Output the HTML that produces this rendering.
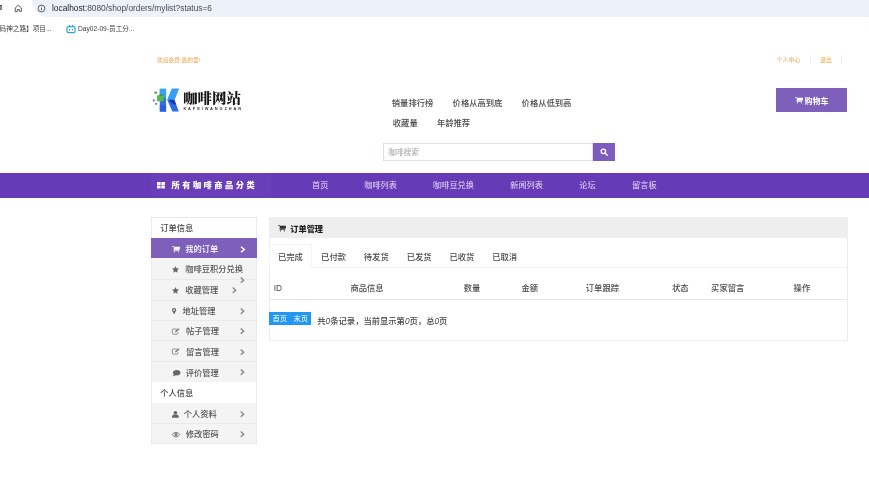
<!DOCTYPE html>
<html lang="zh-CN">
<head>
<meta charset="utf-8">
<title>咖啡网站 - 订单管理</title>
<style>
*{margin:0;padding:0;box-sizing:border-box}
html,body{width:869px;height:500px;overflow:hidden;background:#fff}
body{position:relative;font-family:"Liberation Sans","Noto Sans CJK SC",sans-serif;color:#444;-webkit-font-smoothing:antialiased}
.t{position:absolute;white-space:nowrap;line-height:1;font-size:8.2px}
.b{position:absolute}
svg{position:absolute;overflow:visible}
/* browser chrome */
#pill{left:32px;top:-16px;width:900px;height:33px;border-radius:16.5px;background:#edf1fa}
#url{left:52px;top:4.4px;font-size:8.34px;color:#4a4a4a}
#url b{font-weight:400;color:#1f1f1f}
.bm{top:25.8px;font-size:6.65px;color:#3c3c3c}
/* top bar */
.top{font-size:5.75px;color:#f0a24a;top:57.8px}
.sep{top:55px;width:1px;height:8px;background:#ececec}
/* logo */
#logoT{left:183.2px;top:90.8px;font-size:14.5px;transform:scaleY(.94);transform-origin:0 100%;font-weight:900;font-family:"Liberation Serif","Noto Serif CJK SC",serif;color:#161616;letter-spacing:-.1px}
#logoS{left:183.4px;top:107.2px;font-size:3.9px;letter-spacing:1.92px;color:#333;font-weight:700}
/* header links */
.hl{font-size:8.3px;color:#4a4a4a}
#sin{left:383px;top:142.6px;width:210px;height:18px;border:1px solid #e0dff1;background:#fff}
#sbt{left:592.6px;top:142.6px;width:22.7px;height:18px;background:#7e5bbe}
#sph{left:388.2px;top:148.5px;font-size:7.7px;color:#a3a3a3}
#cart{left:776px;top:88.4px;width:70.8px;height:23.8px;background:#7e5fba}
#cartT{left:804.5px;top:97.7px;font-size:8px;color:#fff;font-weight:700}
/* nav */
#nav{left:0;top:173px;width:869px;height:24.8px;background:#673ab7}
#navc{left:151px;top:173px;width:120px;height:24.8px;background:#6a3eb9}
#navcT{left:171.5px;top:182.1px;font-size:8.2px;font-weight:900;color:#fff;letter-spacing:2.52px}
.nv{top:182.4px;font-size:8.2px;color:#e4daf4}
/* sidebar */
#side{left:151px;top:217.2px;width:105.8px;height:227.2px;background:#f4f4f4;border:1px solid #eaeaea}
.sh{left:151.5px;width:104.8px;height:20.6px;background:#fff}
.sl{left:152px;width:104px;height:1px;background:#e9e9e9}
.sl2{left:152px;width:104px;height:1px;background:#fbfbfb}
.st{font-size:8.25px;color:#555}
.shT{font-size:8.25px;color:#444;left:160.3px}
#act{left:151px;top:238.3px;width:105.8px;height:20.1px;background:#7e5fba}
/* main */
#pan{left:268.5px;top:217.1px;width:579.2px;height:124.3px;border:1px solid #ebebeb;background:#fff}
#panH{left:268.5px;top:217.1px;width:579.2px;height:21.4px;background:#eeeeee}
#panT{left:290.3px;top:225.6px;font-size:8.2px;font-weight:900;color:#1e1e1e}
.tab{top:252.8px;font-size:8.3px;color:#4a4a4a}
#tabA{left:269.3px;top:244px;width:43px;height:24.3px;border:1px solid #f5f5f5;border-bottom:none;background:#fff}
#tabL{left:269.3px;top:267.4px;width:578px;height:1px;background:#f3f3f3}
.th{top:284.1px;font-size:8.3px;color:#4a4a4a}
#thL{left:269.3px;top:299.3px;width:578px;height:1px;background:#e6e6e6}
#pg{left:268.8px;top:311.5px;width:42.6px;height:13.4px;background:#2196f3}
.pgT{top:314.9px;font-size:7.35px;color:#fff}
#pgi{left:317.3px;top:316.7px;font-size:8.3px;color:#444}
#pgi i{font-style:italic}
.t,svg{filter:blur(.3px)}
.st,.shT,.tab,.th,.hl,#pgi{font-weight:500}
</style>
</head>
<body>
<!-- browser chrome -->
<div class="b" id="pill"></div>
<svg style="left:0;top:5.400px" width="2" height="5" viewBox="0 0 2 5"><path d="M0 .6h1.100v3.600H0" fill="none" stroke="#3a3a3a" stroke-width="1.100"/></svg>
<svg style="left:13.600px;top:3.700px" width="8.600" height="8.600" viewBox="0 0 10 10"><path d="M1.4 4.6 5 1.3l3.6 3.3v4H6.2V6.4H3.8v2.5H1.4z" fill="none" stroke="#4a4a4a" stroke-width="1.05" stroke-linejoin="round"/></svg>
<svg style="left:36.700px;top:3.700px" width="9" height="9" viewBox="0 0 10 10"><circle cx="5" cy="5" r="3.8" fill="none" stroke="#444" stroke-width="0.95"/><path d="M5 4.4v2.6M5 2.9v.9" stroke="#444" stroke-width="0.95"/></svg>
<div class="t" id="url"><b>localhost</b>:8080/shop/orders/mylist?status=6</div>
<div class="t bm" style="left:-.5px">码神之路】项目...</div>
<svg style="left:65.5px;top:23.5px" width="10" height="10" viewBox="0 0 10 10"><rect x="1" y="2.6" width="8" height="6" rx="1.4" fill="none" stroke="#29a8d8" stroke-width="1.2"/><path d="M3 .8l1.2 1.6M7 .8 5.8 2.4" stroke="#29a8d8" stroke-width="1"/><path d="M3.5 5v1.4M6.5 5v1.4" stroke="#29a8d8" stroke-width="1"/></svg>
<div class="t bm" style="left:78px">Day02-09-员工分...</div>

<!-- top bar -->
<div class="t top" style="left:157px">欢迎会员:鑫的里!</div>
<div class="t top" style="left:776.8px;font-size:5.9px">个人中心</div>
<div class="b sep" style="left:809.5px"></div>
<div class="t top" style="left:820px;font-size:5.9px;color:#f2a93b">退出</div>
<div class="b sep" style="left:841px"></div>

<!-- logo -->
<svg style="left:151px;top:87px" width="30" height="27" viewBox="0 0 30 27">
  <path d="M8.800 1.800h6.300v22.800H8.800z" fill="#2d72e4"/>
  <path d="M8.800 1.800h6.300v9H8.800z" fill="#3aa2f2"/>
  <path d="M8.800 18h6.300v6.600H8.800z" fill="#2c5fe0"/>
  <rect x="3.400" y="4.500" width="2.700" height="2.300" fill="#5cb04a"/>
  <rect x="1.900" y="12.500" width="1.700" height="1.800" fill="#2f5f9e"/>
  <rect x="4.200" y="16" width="1.900" height="1.700" fill="#3b86dd"/>
  <rect x="6.100" y="8.300" width="6.500" height="6" fill="#55b944"/>
  <rect x="8.400" y="7.300" width="3.400" height="1.600" fill="#3a9440"/>
  <path d="M20.900 1.800h6.900L23.400 13.100l4.400 11.500h-6.400L16.300 13.100z" fill="#2a6ce8"/>
  <path d="M20.900 1.800h6.900L23.400 13.100H16.300z" fill="#369ff5"/>
  <path d="M18.400 12.400l5 .5 1.900 5.200-5.400-2.400z" fill="#1a38a8"/>
</svg>
<div class="t" id="logoT">咖啡网站</div>
<div class="t" id="logoS">KAFEIWANGZHAN</div>

<!-- header links -->
<div class="t hl" style="left:391.8px;top:99.1px">销量排行榜</div>
<div class="t hl" style="left:452.6px;top:99.1px">价格从高到底</div>
<div class="t hl" style="left:521.6px;top:99.1px">价格从低到高</div>
<div class="t hl" style="left:392.8px;top:119.1px">收藏量</div>
<div class="t hl" style="left:436.9px;top:119.1px">年龄推荐</div>
<div class="b" id="sin"></div>
<div class="t" id="sph">咖啡搜索</div>
<div class="b" id="sbt"></div>
<svg style="left:599.600px;top:147.700px" width="8.400" height="8.400" viewBox="0 0 10 10"><circle cx="4" cy="4" r="2.7" fill="none" stroke="#fff" stroke-width="1.5"/><path d="M6 6l2.6 2.6" stroke="#fff" stroke-width="1.7" stroke-linecap="round"/></svg>
<div class="b" id="cart"></div>
<svg style="left:795px;top:97.400px" width="8" height="6.6" viewBox="0 0 8 6.6"><path d="M0 .1h1.300l.5.600h6.200l-.3 3H2.300v.600h4.800v.600H1.700V1.100L1 .7H0z" fill="#fff"/><circle cx="2.400" cy="5.800" r=".650" fill="#fff"/><circle cx="6.400" cy="5.800" r=".650" fill="#fff"/></svg>
<div class="t" id="cartT">购物车</div>

<!-- nav -->
<div class="b" id="nav"></div>
<div class="b" id="navc"></div>
<svg style="left:156.6px;top:182px" width="8" height="7" viewBox="0 0 8 7"><path d="M0 0h3.6v2.9H0zM4.3 0h3.6v2.9H4.3zM0 3.6h3.6v2.9H0zM4.3 3.6h3.6v2.9H4.3z" fill="#fff"/></svg>
<div class="t" id="navcT">所有咖啡商品分类</div>
<div class="t nv" style="left:312px">首页</div>
<div class="t nv" style="left:364.2px">咖啡列表</div>
<div class="t nv" style="left:433px">咖啡豆兑换</div>
<div class="t nv" style="left:510.2px">新闻列表</div>
<div class="t nv" style="left:579.2px">论坛</div>
<div class="t nv" style="left:632px">留言板</div>

<!-- sidebar -->
<div class="b" id="side"></div>
<div class="b sh" style="top:218px"></div>
<div class="t shT" style="top:225.2px">订单信息</div>
<div class="b" id="act"></div>
<div class="b sl" style="top:279px"></div>
<div class="b sl" style="top:300.1px"></div>
<div class="b sl" style="top:319.9px"></div>
<div class="b sl" style="top:340px"></div>
<div class="b sl" style="top:360.8px"></div>
<div class="b sh" style="top:382.4px"></div>
<div class="b sl" style="top:422.7px"></div>

<svg style="left:172px;top:245.8px" width="8" height="6.6" viewBox="0 0 8 6.6"><path d="M0 .1h1.300l.5.600h6.200l-.3 3H2.300v.600h4.800v.600H1.700V1.100L1 .7H0z" fill="#fff"/><circle cx="2.400" cy="5.800" r=".650" fill="#fff"/><circle cx="6.400" cy="5.800" r=".650" fill="#fff"/></svg>
<div class="t st" style="left:185.2px;top:245.8px;color:#fff">我的订单</div>
<svg class="chv" style="left:239.7px;top:245.5px" width="5.5" height="7" viewBox="0 0 5.5 7"><path d="M1 .7 4.3 3.5 1 6.3" fill="none" stroke="#fff" stroke-width="1.5"/></svg>

<svg style="left:172.400px;top:266.200px" width="7" height="6.700" viewBox="0 0 10 9.6"><path d="M5 0l1.5 3.3 3.5.4-2.6 2.4.7 3.5L5 7.9 1.9 9.6l.7-3.5L0 3.7l3.5-.4z" fill="#666"/></svg>
<div class="t st" style="left:185.2px;top:266.3px">咖啡豆积分兑换</div>
<svg style="left:239.9px;top:277.2px" width="4.6" height="6.4" viewBox="0 0 4.6 6.4"><path d="M.7.6 3.7 3.2.7 5.8" fill="none" stroke="#858585" stroke-width="1.3"/></svg>

<svg style="left:172.400px;top:286.800px" width="7" height="6.700" viewBox="0 0 10 9.6"><path d="M5 0l1.5 3.3 3.5.4-2.6 2.4.7 3.5L5 7.9 1.9 9.6l.7-3.5L0 3.7l3.5-.4z" fill="#666"/></svg>
<div class="t st" style="left:185.2px;top:286.9px">收藏管理</div>
<svg style="left:231.5px;top:286.8px" width="4.6" height="6.4" viewBox="0 0 4.6 6.4"><path d="M.7.6 3.7 3.2.7 5.8" fill="none" stroke="#858585" stroke-width="1.3"/></svg>

<svg style="left:172.4px;top:308.100px" width="4.2" height="6.6" viewBox="0 0 6 9.4"><path d="M3 0a3 3 0 0 1 3 3c0 1.700-2 4.200-3 6.400C2 7.200 0 4.700 0 3a3 3 0 0 1 3-3zm0 1.700a1.300 1.300 0 1 0 0 2.600 1.300 1.300 0 0 0 0-2.600z" fill="#666"/></svg>
<div class="t st" style="left:182.6px;top:307.7px">地址管理</div>
<svg style="left:239.9px;top:307.6px" width="4.6" height="6.4" viewBox="0 0 4.6 6.4"><path d="M.7.6 3.7 3.2.7 5.8" fill="none" stroke="#858585" stroke-width="1.3"/></svg>

<svg style="left:172px;top:327.6px" width="8" height="7" viewBox="0 0 8 7"><path d="M5.200 1H1.200a.8.800 0 0 0-.8.800v3.600a.8.800 0 0 0 .8.800h3.900a.8.800 0 0 0 .8-.8V4.200" fill="none" stroke="#777" stroke-width=".8"/><path d="M3 4.400l.4-1.400L6.600.2l1 1-3.200 2.800z" fill="#777"/></svg>
<div class="t st" style="left:185.9px;top:328.1px">帖子管理</div>
<svg style="left:239.9px;top:328px" width="4.6" height="6.4" viewBox="0 0 4.6 6.4"><path d="M.7.6 3.7 3.2.7 5.8" fill="none" stroke="#858585" stroke-width="1.3"/></svg>

<svg style="left:172px;top:348.2px" width="8" height="7" viewBox="0 0 8 7"><path d="M5.200 1H1.200a.8.800 0 0 0-.8.800v3.600a.8.800 0 0 0 .8.800h3.900a.8.800 0 0 0 .8-.8V4.200" fill="none" stroke="#777" stroke-width=".8"/><path d="M3 4.400l.4-1.400L6.600.2l1 1-3.200 2.800z" fill="#777"/></svg>
<div class="t st" style="left:185.9px;top:348.7px">留言管理</div>
<svg style="left:239.9px;top:348.6px" width="4.6" height="6.4" viewBox="0 0 4.6 6.4"><path d="M.7.6 3.7 3.2.7 5.8" fill="none" stroke="#858585" stroke-width="1.3"/></svg>

<svg style="left:172px;top:370.200px" width="8.400" height="6.800" viewBox="0 0 8.400 6.800"><ellipse cx="4.700" cy="2.700" rx="3.700" ry="2.700" fill="#666"/><path d="M2.200 4.200.4 6.600l3.400-1.400z" fill="#666"/></svg>
<div class="t st" style="left:185.8px;top:369.5px">评价管理</div>
<svg style="left:239.9px;top:369.4px" width="4.6" height="6.4" viewBox="0 0 4.6 6.4"><path d="M.7.6 3.7 3.2.7 5.800" fill="none" stroke="#858585" stroke-width="1.3"/></svg>

<div class="t shT" style="top:390.2px">个人信息</div>

<svg style="left:172px;top:410.700px" width="6.800" height="6.800" viewBox="0 0 6.600 6.800"><circle cx="3.300" cy="1.800" r="1.800" fill="#666"/><path d="M0 6.800V5.400C0 4.200 1.200 3.600 3.300 3.600S6.600 4.200 6.600 5.400v1.400z" fill="#666"/></svg>
<div class="t st" style="left:183.7px;top:410.6px">个人资料</div>
<svg style="left:239.9px;top:410.5px" width="4.6" height="6.4" viewBox="0 0 4.6 6.4"><path d="M.7.6 3.7 3.2.7 5.8" fill="none" stroke="#858585" stroke-width="1.3"/></svg>

<svg style="left:172px;top:432px" width="8" height="5.200" viewBox="0 0 8.400 5.200"><path d="M.3 2.600C1.400 1 2.700.4 4.200.4s2.800.6 3.900 2.200C7 4.200 5.700 4.800 4.200 4.800S1.400 4.200.3 2.600z" fill="none" stroke="#707070" stroke-width="1"/><circle cx="4.200" cy="2.600" r="1.500" fill="#707070"/></svg>
<div class="t st" style="left:185.8px;top:431.1px">修改密码</div>
<svg style="left:239.9px;top:431px" width="4.6" height="6.4" viewBox="0 0 4.6 6.4"><path d="M.7.6 3.7 3.2.7 5.8" fill="none" stroke="#858585" stroke-width="1.3"/></svg>

<!-- main panel -->
<div class="b" id="pan"></div>
<div class="b" id="panH"></div>
<svg style="left:278.200px;top:225.200px" width="8" height="6.6" viewBox="0 0 8 6.6"><path d="M0 .1h1.300l.5.600h6.200l-.3 3H2.300v.600h4.800v.600H1.700V1.100L1 .7H0z" fill="#2e2e2e"/><circle cx="2.400" cy="5.800" r=".650" fill="#2e2e2e"/><circle cx="6.400" cy="5.800" r=".650" fill="#2e2e2e"/></svg>
<div class="t" id="panT">订单管理</div>
<div class="b" id="tabL"></div>
<div class="b" id="tabA"></div>
<div class="t tab" style="left:278px">已完成</div>
<div class="t tab" style="left:321.1px">已付款</div>
<div class="t tab" style="left:363.8px">待发货</div>
<div class="t tab" style="left:406.7px">已发货</div>
<div class="t tab" style="left:449.4px">已收货</div>
<div class="t tab" style="left:492.2px">已取消</div>

<div class="t th" style="left:273.8px">ID</div>
<div class="t th" style="left:350.4px">商品信息</div>
<div class="t th" style="left:463.7px">数量</div>
<div class="t th" style="left:521.4px">金额</div>
<div class="t th" style="left:585.8px">订单跟踪</div>
<div class="t th" style="left:672px">状态</div>
<div class="t th" style="left:711.1px">买家留言</div>
<div class="t th" style="left:793.6px">操作</div>
<div class="b" id="thL"></div>

<div class="b" id="pg"></div>
<div class="t pgT" style="left:272.5px">首页</div>
<div class="t pgT" style="left:293.5px">末页</div>
<div class="t" id="pgi">共<i>0</i>条记录，当前显示第<i>0</i>页，总<i>0</i>页</div>
</body>
</html>
